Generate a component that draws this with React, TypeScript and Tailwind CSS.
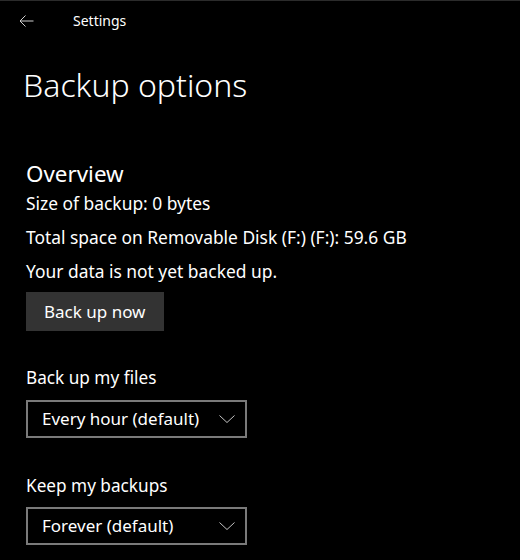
const Dropdown = ({ value }: { value: string }) => (
  <div className="flex h-[38px] w-[221px] items-center justify-between border-2 border-[#7a7a7a] pl-[14px] pr-[10px] text-[17px] leading-[20px]">
    <span>{value}</span>
    <svg width="16" height="8" viewBox="0 0 16 8" fill="none" stroke="#c4c4c4" strokeWidth="1">
      <path d="M0.5 0.5 L8 7.5 L15.5 0.5" />
    </svg>
  </div>
);

export default function App() {
  return (
    <div className="h-[560px] w-[520px] overflow-hidden border-t border-[#2b2b2b] bg-black text-white font-['Noto_Sans',sans-serif]">
      <div className="flex h-[40px] items-center">
        <svg className="ml-[19px]" width="15" height="12" viewBox="0 0 15 12" fill="none" stroke="#d0d0d0" strokeWidth="1">
          <path d="M14.5 6 H1 M6.5 0.5 L1 6 L6.5 11.5" />
        </svg>
        <span className="ml-[39px] text-[14px] leading-[14px]">Settings</span>
      </div>

      <h1 className="ml-[23px] mt-[28px] text-[32px] font-light leading-[32px]">Backup options</h1>

      <div className="ml-[26px] mt-[62px]">
        <h2 className="text-[22.4px] leading-[22px]">Overview</h2>
        <div className="mt-[8px] flex flex-col gap-[14px] text-[17.4px] leading-[20px]">
          <p>Size of backup: 0 bytes</p>
          <p>Total space on Removable Disk (F:) (F:): 59.6 GB</p>
          <p>Your data is not yet backed up.</p>
        </div>
        <button className="mt-[11px] flex h-[39px] w-[138px] items-center bg-[#333333] pl-[18px] text-[17px] leading-[20px]">
          Back up now
        </button>

        <p className="mt-[37px] text-[17.2px] leading-[20px]">Back up my files</p>
        <div className="mt-[12px]">
          <Dropdown value="Every hour (default)" />
        </div>

        <p className="mt-[38px] text-[17.2px] leading-[20px]">Keep my backups</p>
        <div className="mt-[11px]">
          <Dropdown value="Forever (default)" />
        </div>
      </div>
    </div>
  );
}
